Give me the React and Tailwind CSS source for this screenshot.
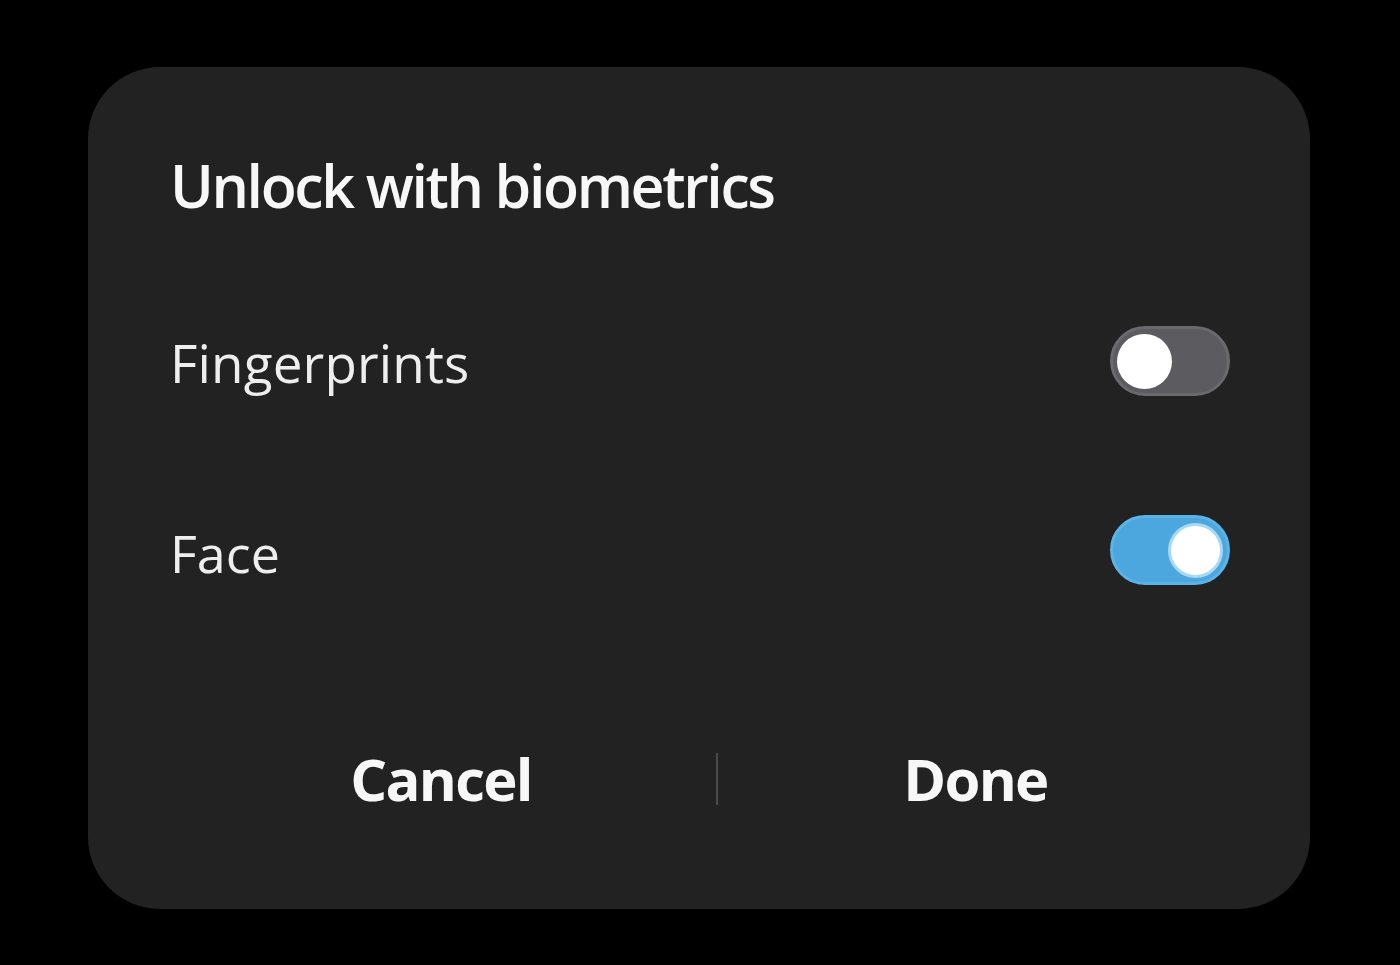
export default function App() {
  return (
    <div className="w-full h-[965px] bg-black pt-[67px] pl-[88px] overflow-hidden" style={{ fontFamily: '"Open Sans", "Noto Sans", sans-serif' }}>
      <div className="w-[1222px] h-[842px] bg-[#222222] rounded-[72px] flex flex-col pt-[88px] pl-[82px] pr-[80px]">
        <h1 className="h-[62px] text-[59px] leading-none font-semibold text-[#f7f7f7] tracking-[-0.04em] whitespace-nowrap pt-[1px]">
          Unlock with biometrics
        </h1>

        <div className="mt-[109px] h-[70px] flex items-center justify-between">
          <span className="text-[53px] leading-none text-[#eeeeee] tracking-[0.003em] translate-y-[1px]">Fingerprints</span>
          <div className="w-[120px] h-[70px] rounded-full bg-[#5c5c60] border-[3px] border-[#6a6a6e] flex items-center pl-[4px]">
            <div className="w-[55px] h-[55px] rounded-full bg-white" />
          </div>
        </div>

        <div className="mt-[119px] h-[70px] flex items-center justify-between">
          <span className="text-[52px] leading-none text-[#eeeeee] translate-y-[3px]">Face</span>
          <div className="w-[120px] h-[70px] rounded-full bg-[#4ba7de] border-[3px] border-[#5cb3e6] flex items-center justify-end pr-[4px]">
            <div className="w-[55px] h-[55px] rounded-full bg-white border-[3px] border-[#a9d8f3]" />
          </div>
        </div>

        <div className="mt-[164px] h-[60px] grid grid-cols-[546px_2px_515px] items-center">
          <button className="text-[58px] leading-none font-bold text-[#f7f7f7] tracking-[-0.03em] text-center pr-[4px]">Cancel</button>
          <div className="w-[2px] h-[52px] bg-[#4a4a4a]" />
          <button className="text-[58px] leading-none font-bold text-[#f7f7f7] tracking-[-0.03em] text-center">Done</button>
        </div>
      </div>
    </div>
  );
}
